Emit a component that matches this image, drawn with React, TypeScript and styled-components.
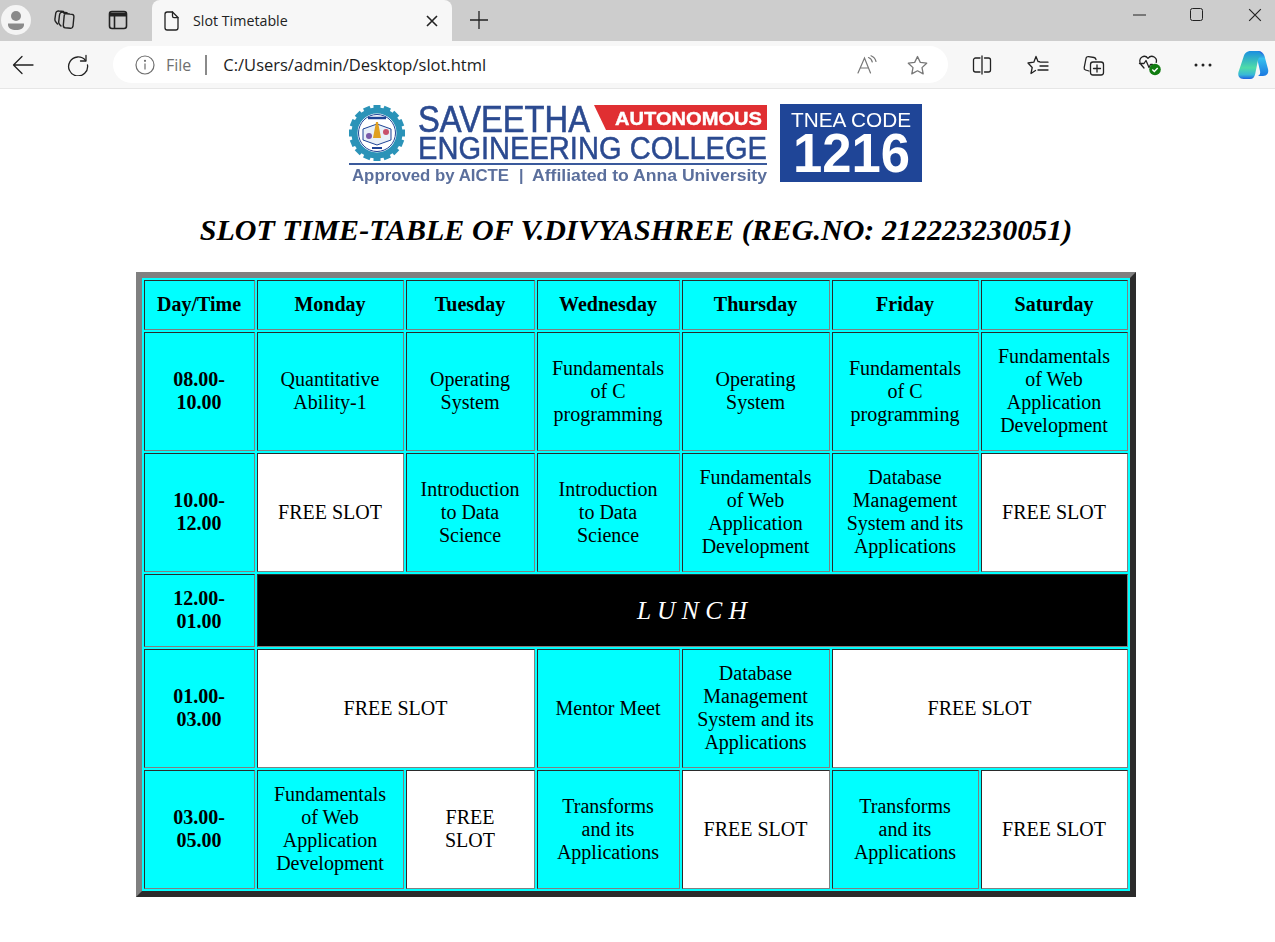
import React from 'react';
import styled, { createGlobalStyle } from 'styled-components';

const GlobalStyle = createGlobalStyle`
  html, body {
    margin: 0;
    padding: 0;
    background: #fff;
  }
`;

const TabStrip = styled.div`
  height: 41px;
  background: #cdcdcd;
  display: flex;
  align-items: flex-end;
  font-family: "Open Sans", "Noto Sans", sans-serif;
`;

const ProfileBadge = styled.div`
  width: 30px;
  height: 30px;
  margin: 0 0 6px 1px;
  border-radius: 50%;
  background: #f4f4f4;
  display: flex;
  align-items: center;
  justify-content: center;
`;

const StripButton = styled.div<{ $left: number }>`
  width: 24px;
  height: 24px;
  margin: 0 0 9px ${(p) => p.$left}px;
  display: flex;
  align-items: center;
  justify-content: center;
`;

const Tab = styled.div`
  width: 300px;
  height: 41px;
  margin-left: 22px;
  padding: 0 14px 0 10px;
  box-sizing: border-box;
  background: #f7f7f7;
  border-radius: 8px 8px 0 0;
  display: flex;
  align-items: center;
  gap: 13px;
`;

const TabTitle = styled.span`
  flex: 1;
  font-size: 14.25px;
  color: #222;
`;

const WindowControls = styled.div`
  margin-left: auto;
  height: 41px;
  display: flex;
  align-items: center;
  gap: 44px;
  padding: 0 13px 11px 0;
  box-sizing: border-box;
`;

const Toolbar = styled.div`
  height: 47px;
  background: #f7f7f7;
  border-bottom: 1px solid #e6e6e6;
  display: flex;
  align-items: center;
  font-family: "Open Sans", "Noto Sans", sans-serif;
`;

const NavButton = styled.div<{ $left: number }>`
  width: 24px;
  height: 24px;
  margin-left: ${(p) => p.$left}px;
  display: flex;
  align-items: center;
  justify-content: center;
  flex: none;
`;

const AddressBar = styled.div`
  width: 835px;
  height: 37px;
  margin-left: 23px;
  padding: 0 20px 0 22px;
  box-sizing: border-box;
  background: #fff;
  border-radius: 19px;
  display: flex;
  align-items: center;
  flex: none;
`;

const FileLabel = styled.span`
  margin-left: 11px;
  font-size: 16px;
  color: #6f6f6f;
`;

const Divider = styled.span`
  width: 2px;
  height: 20px;
  margin: 0 16px 0 14px;
  background: #8a8a8a;
`;

const Url = styled.span`
  flex: 1;
  font-size: 16.5px;
  color: #1c1c1c;
`;

const AddressIcons = styled.div`
  display: flex;
  align-items: center;
  gap: 29px;
`;

const Page = styled.main`
  padding: 11px 3px 45px 0;
  display: flex;
  flex-direction: column;
  align-items: center;
  font-family: "Liberation Serif", "Times New Roman", serif;
`;

const Logo = styled.svg`
  display: block;
  filter: blur(0.45px);
`;

const Heading = styled.h2`
  margin: 25px 0 25px;
  font-size: 30px;
  line-height: 34px;
  letter-spacing: 0.03px;
  font-style: italic;
  font-weight: bold;
  color: #000;
`;

const Timetable = styled.table`
  width: 1000px;
  table-layout: fixed;
  border-collapse: separate;
  border-spacing: 2px;
  border-width: 6px;
  border-style: solid;
  border-color: #808080 #2b2b2b #2b2b2b #808080;
  background: #00ffff;
  font-size: 20px;
  line-height: 23px;
  color: #000;
`;

const cellBase = `
  box-sizing: border-box;
  padding: 0 14px 1px 13px;
  border-width: 1px;
  border-style: solid;
  border-color: #2b2b2b #808080 #808080 #2b2b2b;
  text-align: center;
  vertical-align: middle;
`;

const HeadCell = styled.th<{ $width?: number }>`
  ${cellBase}
  width: ${(p) => (p.$width ? `${p.$width}px` : 'auto')};
  font-weight: bold;
`;

const TimeCell = styled.th`
  ${cellBase}
  font-weight: bold;
`;

const Cell = styled.td<{ $free?: boolean }>`
  ${cellBase}
  background: ${(p) => (p.$free ? '#fff' : '#00ffff')};
`;

const LunchCell = styled.td`
  ${cellBase}
  background: #000;
  color: #fff;
  font-size: 25.5px;
  font-style: italic;
`;

const DayTimeCell = styled(HeadCell)`
  padding: 0 12px 1px 11px;
`;

const Row = styled.tr<{ $height: number }>`
  height: ${(p) => p.$height}px;
`;

const line = { fill: 'none', stroke: '#222', strokeWidth: 1.3, strokeLinecap: 'round', strokeLinejoin: 'round' } as const;

const ProfileIcon = () => (
  <svg width="22" height="22" viewBox="0 0 22 22">
    <circle cx="11" cy="7" r="5" fill="#8a8a8a" />
    <path d="M3 14.500h16v1.500c0 3-3.500 5-8 5s-8-2-8-5z" fill="#8a8a8a" />
  </svg>
);

const CollectionsIcon = () => (
  <svg width="22" height="20" viewBox="0 0 22 20" {...line} strokeWidth={1.4}>
    <path d="M11 3.500 16.500 4c-2 0 3 .2 3.500 .6.700 .6 1 1.200 .9 2.200l-.9 9.400c-.2 1.400-1.200 2.300-2.600 2.100l-5.200-.6c-1.300-.2-2-1.200-1.900-2.500l.9-9.600c.1-1.300 .7-2 1.800-2.100z" />
    <path d="M8 16 6.600 14.500c-.7-.8-1-1.600-.9-2.600L6.500 5c.2-2 1.500-3 3.300-2.800L14 2.700" />
    <path d="M4.500 14 2.500 11.500c-.5-.7-.7-1.500-.6-2.400L2.700 3.500C2.900 1.700 4.200.7 6 1l4.500 .5" />
  </svg>
);

const TabsIcon = () => (
  <svg width="20" height="20" viewBox="0 0 20 20" {...line} strokeWidth={1.6}>
    <rect x="1.500" y="1.500" width="17" height="17" rx="2.500" />
    <path d="M1.500 4.500h17" strokeWidth={4} strokeLinecap="butt" />
    <path d="M6.500 5v13" />
  </svg>
);

const PageIcon = () => (
  <svg width="18" height="20" viewBox="0 0 18 20" {...line}>
    <path d="M3 3.200C3 2 4 1 5.200 1H10.500L16 6.500v10.300c0 1.200-1 2.200-2.200 2.200H5.200C4 19 3 18 3 16.800z" />
    <path d="M10.500 1v4c0 .9.700 1.600 1.500 1.600h4" />
  </svg>
);

const CrossIcon = ({ size = 12, width = 1.6 }: { size?: number; width?: number }) => (
  <svg width={size} height={size} viewBox="0 0 12 12" fill="none" stroke="#222" strokeWidth={width}>
    <path d="M1 1l10 10M11 1 1 11" />
  </svg>
);

const PlusIcon = () => (
  <svg width="18" height="18" viewBox="0 0 18 18" fill="none" stroke="#222" strokeWidth="1.300">
    <path d="M9 0v18M0 9h18" />
  </svg>
);

const BackIcon = () => (
  <svg width="22" height="22" viewBox="0 0 22 22" {...line}>
    <path d="M21 11H1.500M10 2.500 1.500 11l8.500 8.500" />
  </svg>
);

const RefreshIcon = () => (
  <svg width="22" height="22" viewBox="0 0 22 22" {...line}>
    <path d="M18.500 6.500A9.500 9.500 0 1 0 20.500 11" />
    <path d="M19 1.500v5.500h-5.500" />
  </svg>
);

const InfoIcon = () => (
  <svg width="20" height="20" viewBox="0 0 20 20" fill="none" stroke="#6f6f6f" strokeWidth="1.200">
    <circle cx="10" cy="10" r="9" />
    <path d="M10 8.500v6" />
    <circle cx="10" cy="5.800" r=".5" fill="#6f6f6f" />
  </svg>
);

const ReadAloudIcon = () => (
  <svg width="21" height="20" viewBox="0 0 21 20" fill="none" stroke="#777" strokeWidth="1.200" strokeLinecap="round">
    <path d="M1 18 7.500 3l6 15M3.500 13h8" />
    <path d="M11.500 2.500c2 .7 3.300 2.300 3.800 4.500M14 .8c2.500 1 4.300 3 5 5.700" />
  </svg>
);

const StarIcon = () => (
  <svg width="21" height="20" viewBox="0 0 21 20" fill="none" stroke="#777" strokeWidth="1.300" strokeLinejoin="round">
    <path d="m10.500 1.500 2.800 5.900 6.400.8-4.700 4.400 1.200 6.300-5.700-3.100-5.700 3.100 1.200-6.300L1.300 8.200l6.400-.8z" />
  </svg>
);

const SplitIcon = () => (
  <svg width="20" height="20" viewBox="0 0 20 20" {...line}>
    <path d="M8 3H3.500C2.500 3 1.500 4 1.500 5v10c0 1 1 2 2 2H8M12.500 3h4c1 0 2 1 2 2v10c0 1-1 2-2 2h-4M10 1v18" />
  </svg>
);

const FavoritesIcon = () => (
  <svg width="22" height="20" viewBox="0 0 22 20" {...line}>
    <path d="m9 1.500 2 5 1.500.2M8.500 15.500 4 18.500l1.200-6L1 8l5.800-.8L9 1.500M13 7.200h8M13 11h8M11 15h10" />
  </svg>
);

const CollectionsAddIcon = () => (
  <svg width="22" height="22" viewBox="0 0 22 22" {...line}>
    <path d="M6 17 2.500 16c-1-.3-1.500-1.200-1.300-2.300L3 4.500C3.200 3.300 4.300 2.500 5.500 2.700L11 3.500c1 .2 1.700 .9 2 2" />
    <rect x="7.500" y="8" width="13" height="13" rx="2.500" />
    <path d="M14 11v7M10.500 14.500h7" />
  </svg>
);

const HealthIcon = () => (
  <svg width="24" height="24" viewBox="0 0 24 24">
    <path
      {...line}
      d="M6 15 3 11.500C1 9 1.500 5.500 4 4c2.200-1.300 4.500-.6 6 1.300C11.500 3.400 14 2.700 16.200 4c2 1.200 2.600 3.500 2 5.500M1.500 10.500H6l2-3 3 7 1.500-3h2"
    />
    <circle cx="17" cy="16.500" r="5.800" fill="#107c10" />
    <path d="m14.300 16.500 2 2 3.400-3.600" fill="none" stroke="#fff" strokeWidth="1.400" />
  </svg>
);

const MoreIcon = () => (
  <svg width="18" height="4" viewBox="0 0 18 4" fill="#222">
    <circle cx="2" cy="2" r="1.500" />
    <circle cx="9" cy="2" r="1.500" />
    <circle cx="16" cy="2" r="1.500" />
  </svg>
);

const CopilotIcon = () => (
  <svg width="32" height="30" viewBox="0 0 32 30" style={{ flex: 'none' }}>
    <defs>
      <linearGradient id="copilotA" x1="0" y1="0" x2="0" y2="1">
        <stop offset="0" stopColor="#1a8fe0" />
        <stop offset=".6" stopColor="#4fdca8" />
        <stop offset=".85" stopColor="#38b8d8" />
        <stop offset="1" stopColor="#1f5fe0" />
      </linearGradient>
      <linearGradient id="copilotB" x1="0" y1="0" x2="0" y2="1">
        <stop offset="0" stopColor="#1f55d8" />
        <stop offset=".3" stopColor="#35c0ee" />
        <stop offset="1" stopColor="#1a78e0" />
      </linearGradient>
    </defs>
    <path d="M14 1h7c3.500 0 5.500 2 6.500 5l3.500 13c1 4-1 7-5 7h-5c2-1 2.500-3 2-5L20 8c-.7-3-2.500-5-6-7z" fill="url(#copilotB)" />
    <path d="M14 1C9.500 1 7.500 3.500 6.500 7L1.500 22c-1 4 1 7 5 7H13c3 0 4.500-2 5.200-5L21 10c.5-2 2-4 4-4 -1-3-2.500-5-5-5z" fill="url(#copilotA)" />
  </svg>
);

const gearTeeth = Array.from({ length: 16 }, (_, i) => i * 22.5);

const CollegeLogo = () => (
  <Logo width="574" height="88" viewBox="349 100 574 88">
    <g transform="translate(377 133)">
      {gearTeeth.map((angle) => (
        <rect key={angle} x="-3.500" y="-28" width="7" height="8" fill="#2b93b8" transform={`rotate(${angle})`} />
      ))}
      <circle r="22.500" fill="none" stroke="#2b93b8" strokeWidth="6" />
      <circle r="18.500" fill="#fff" stroke="#1f4597" strokeWidth="1" />
      <path d="M-14 -4 0 -9 14 -4V7L0 12-14 7z" fill="#e8f0f8" stroke="#1f4597" strokeWidth="1" />
      <path d="M-1 -11h2l3 16h-8z" fill="#e0a020" />
      <circle cx="-8" cy="3" r="3" fill="#7a5aa8" />
      <circle cx="9" cy="-1" r="3" fill="#c8506a" />
      <path d="M-9 -15h18" stroke="#1f4597" strokeWidth="2.500" />
      <path d="M-5 15h10" stroke="#1f4597" strokeWidth="2" />
    </g>
    <text x="418" y="132" fontFamily="Liberation Sans" fontSize="37" fill="#2b4a90" stroke="#2b4a90" strokeWidth="0.6" textLength="172" lengthAdjust="spacingAndGlyphs">
      SAVEETHA
    </text>
    <polygon points="594,105 767,105 767,130 606,130" fill="#e02f32" />
    <text x="615" y="125" fontFamily="Liberation Sans" fontWeight="bold" fontSize="19" fill="#fff" stroke="#fff" strokeWidth="0.4" textLength="147" lengthAdjust="spacingAndGlyphs">
      AUTONOMOUS
    </text>
    <text x="418" y="159" fontFamily="Liberation Sans" fontSize="32" fill="#2b4a90" stroke="#2b4a90" strokeWidth="0.5" textLength="349" lengthAdjust="spacingAndGlyphs">
      ENGINEERING COLLEGE
    </text>
    <rect x="349" y="163" width="418" height="2" fill="#3a5a9c" />
    <text x="352" y="181" fontFamily="Liberation Sans" fontWeight="bold" fontSize="16" fill="#5b6f9c" textLength="157" lengthAdjust="spacingAndGlyphs">
      Approved by AICTE
    </text>
    <text x="519" y="181" fontFamily="Liberation Sans" fontWeight="bold" fontSize="16" fill="#5b6f9c">
      |
    </text>
    <text x="532" y="181" fontFamily="Liberation Sans" fontWeight="bold" fontSize="16" fill="#5b6f9c" textLength="235" lengthAdjust="spacingAndGlyphs">
      Affiliated to Anna University
    </text>
    <rect x="780" y="104" width="142" height="78" fill="#1f4597" />
    <text x="791" y="127" fontFamily="Liberation Sans" fontSize="21" fill="#fff" textLength="120" lengthAdjust="spacingAndGlyphs">
      TNEA CODE
    </text>
    <text x="793" y="172" fontFamily="Liberation Sans" fontWeight="bold" fontSize="56" fill="#fff" textLength="117" lengthAdjust="spacingAndGlyphs">
      1216
    </text>
  </Logo>
);

export default function App() {
  return (
    <>
      <GlobalStyle />
      <TabStrip>
        <ProfileBadge>
          <ProfileIcon />
        </ProfileBadge>
        <StripButton $left={21}>
          <CollectionsIcon />
        </StripButton>
        <StripButton $left={30}>
          <TabsIcon />
        </StripButton>
        <Tab>
          <PageIcon />
          <TabTitle>Slot Timetable</TabTitle>
          <CrossIcon />
        </Tab>
        <StripButton $left={15}>
          <PlusIcon />
        </StripButton>
        <WindowControls>
          <svg width="13" height="2" viewBox="0 0 13 2"><path d="M0 1h13" stroke="#222" strokeWidth="1" /></svg>
          <svg width="14" height="14" viewBox="0 0 14 14"><rect x=".5" y=".5" width="12" height="12" rx="2" fill="none" stroke="#222" /></svg>
          <CrossIcon size={14} width={1} />
        </WindowControls>
      </TabStrip>
      <Toolbar>
        <NavButton $left={11}>
          <BackIcon />
        </NavButton>
        <NavButton $left={31}>
          <RefreshIcon />
        </NavButton>
        <AddressBar>
          <InfoIcon />
          <FileLabel>File</FileLabel>
          <Divider />
          <Url>C:/Users/admin/Desktop/slot.html</Url>
          <AddressIcons>
            <ReadAloudIcon />
            <StarIcon />
          </AddressIcons>
        </AddressBar>
        <NavButton $left={22}>
          <SplitIcon />
        </NavButton>
        <NavButton $left={32}>
          <FavoritesIcon />
        </NavButton>
        <NavButton $left={32}>
          <CollectionsAddIcon />
        </NavButton>
        <NavButton $left={32}>
          <HealthIcon />
        </NavButton>
        <NavButton $left={29}>
          <MoreIcon />
        </NavButton>
        <NavButton $left={26}>
          <CopilotIcon />
        </NavButton>
      </Toolbar>
      <Page>
        <CollegeLogo />
        <Heading>SLOT TIME-TABLE OF V.DIVYASHREE (REG.NO: 212223230051)</Heading>
        <Timetable>
          <thead>
            <Row $height={50}>
              <DayTimeCell $width={111}>Day/Time</DayTimeCell>
              <HeadCell $width={147}>Monday</HeadCell>
              <HeadCell $width={129}>Tuesday</HeadCell>
              <HeadCell $width={143}>Wednesday</HeadCell>
              <HeadCell $width={148}>Thursday</HeadCell>
              <HeadCell $width={147}>Friday</HeadCell>
              <HeadCell>Saturday</HeadCell>
            </Row>
          </thead>
          <tbody>
            <Row $height={119}>
              <TimeCell>08.00-10.00</TimeCell>
              <Cell>Quantitative Ability-1</Cell>
              <Cell>Operating System</Cell>
              <Cell>Fundamentals of C programming</Cell>
              <Cell>Operating System</Cell>
              <Cell>Fundamentals of C programming</Cell>
              <Cell>Fundamentals of Web Application Development</Cell>
            </Row>
            <Row $height={119}>
              <TimeCell>10.00-12.00</TimeCell>
              <Cell $free>FREE SLOT</Cell>
              <Cell>Introduction to Data Science</Cell>
              <Cell>Introduction to Data Science</Cell>
              <Cell>Fundamentals of Web Application Development</Cell>
              <Cell>Database Management System and its Applications</Cell>
              <Cell $free>FREE SLOT</Cell>
            </Row>
            <Row $height={73}>
              <TimeCell>12.00-01.00</TimeCell>
              <LunchCell colSpan={6}>L U N C H</LunchCell>
            </Row>
            <Row $height={119}>
              <TimeCell>01.00-03.00</TimeCell>
              <Cell $free colSpan={2}>FREE SLOT</Cell>
              <Cell>Mentor Meet</Cell>
              <Cell>Database Management System and its Applications</Cell>
              <Cell $free colSpan={2}>FREE SLOT</Cell>
            </Row>
            <Row $height={119}>
              <TimeCell>03.00-05.00</TimeCell>
              <Cell>Fundamentals of Web Application Development</Cell>
              <Cell $free>FREE SLOT</Cell>
              <Cell>Transforms and its Applications</Cell>
              <Cell $free>FREE SLOT</Cell>
              <Cell>Transforms and its Applications</Cell>
              <Cell $free>FREE SLOT</Cell>
            </Row>
          </tbody>
        </Timetable>
      </Page>
    </>
  );
}
